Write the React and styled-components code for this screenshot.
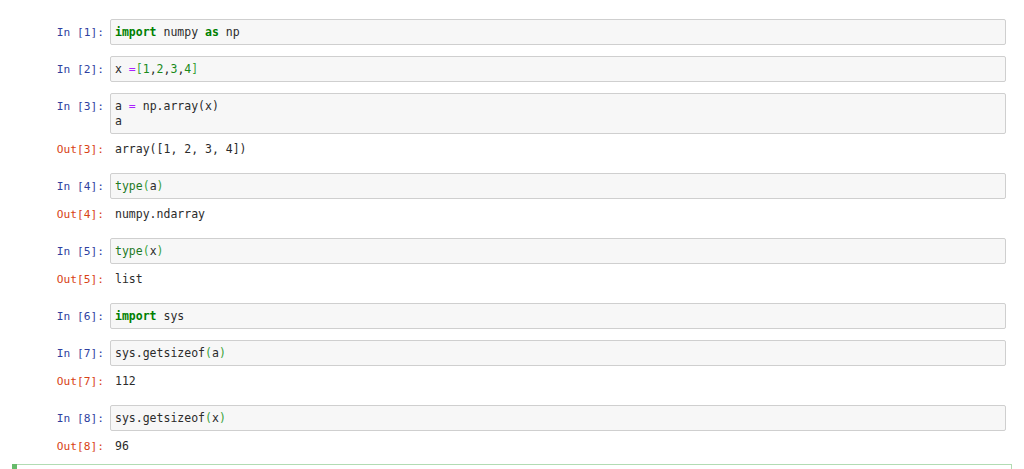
import React from 'react'
import styled, { createGlobalStyle } from 'styled-components'

const GlobalStyle = createGlobalStyle`
html, body {
    margin: 0;
    padding: 0;
    background: #fff;
    overflow: hidden;
}
`

const Notebook = styled.div`
display: flex;
flex-direction: column;
padding: 13px 12px 0 12px;
font-family: "DejaVu Sans Mono", "Liberation Mono", monospace;
font-size: 11.5px;
line-height: 15px;
color: #2b2b2b;
`

const Cell = styled.div`
position: relative;
display: flex;
flex-direction: column;
padding: 5px 5px 4px 5px;
border: 1px solid ${p => (p.selected ? '#b2dcb3' : 'transparent')};
min-height: ${p => (p.selected ? '40px' : 'auto')};
&::before {
    content: '';
    display: ${p => (p.selected ? 'block' : 'none')};
    position: absolute;
    left: -1px;
    top: -1px;
    bottom: -1px;
    width: 5px;
    background: #66bb6a;
}
`

const Row = styled.div`
display: flex;
align-items: flex-start;
`

const Prompt = styled.div`
width: 92px;
flex: none;
box-sizing: border-box;
padding: ${p => (p.out ? '8px' : '6px')} 6px 0 0;
text-align: right;
font-size: 11.2px;
color: ${p => (p.out ? '#d84315' : '#303f9f')};
white-space: pre;
`

const CodeBox = styled.div`
flex: 1;
background: #f7f7f7;
border: 1px solid #cfcfcf;
border-radius: 2px;
padding: 5px 4px 4px 4px;
white-space: pre;
`

const OutText = styled.div`
flex: 1;
height: 28px;
box-sizing: border-box;
padding: 8px 5px 5px 5px;
white-space: pre;
`

const Kw = styled.span`
color: #008000;
font-weight: bold;
`

const Op = styled.span`
color: #aa22ff;
`

const Num = styled.span`
color: #1a8a1a;
`

const Br = styled.span`
color: #3aa33a;
`

const Builtin = styled.span`
color: #1f7a1f;
`

function InCell({ n, children, out }) {
    return (
        <Cell>
            <Row>
                <Prompt>{`In [${n}]:`}</Prompt>
                <CodeBox>{children}</CodeBox>
            </Row>
            {out !== undefined && (
                <Row>
                    <Prompt out>{`Out[${n}]:`}</Prompt>
                    <OutText>{out}</OutText>
                </Row>
            )}
        </Cell>
    )
}

export default function App() {
    return (
        <Notebook>
            <GlobalStyle />
            <InCell n={1}>
                <Kw>import</Kw> numpy <Kw>as</Kw> np
            </InCell>
            <InCell n={2}>
                x <Op>=</Op><Br>[</Br><Num>1</Num>,<Num>2</Num>,<Num>3</Num>,<Num>4</Num><Br>]</Br>
            </InCell>
            <InCell n={3} out="array([1, 2, 3, 4])">
                a <Op>=</Op> np.array(x){'\n'}a
            </InCell>
            <InCell n={4} out="numpy.ndarray">
                <Builtin>type</Builtin><Br>(</Br>a<Br>)</Br>
            </InCell>
            <InCell n={5} out="list">
                <Builtin>type</Builtin><Br>(</Br>x<Br>)</Br>
            </InCell>
            <InCell n={6}>
                <Kw>import</Kw> sys
            </InCell>
            <InCell n={7} out="112">
                sys.getsizeof<Br>(</Br>a<Br>)</Br>
            </InCell>
            <InCell n={8} out="96">
                sys.getsizeof<Br>(</Br>x<Br>)</Br>
            </InCell>
            <Cell selected />
        </Notebook>
    )
}
